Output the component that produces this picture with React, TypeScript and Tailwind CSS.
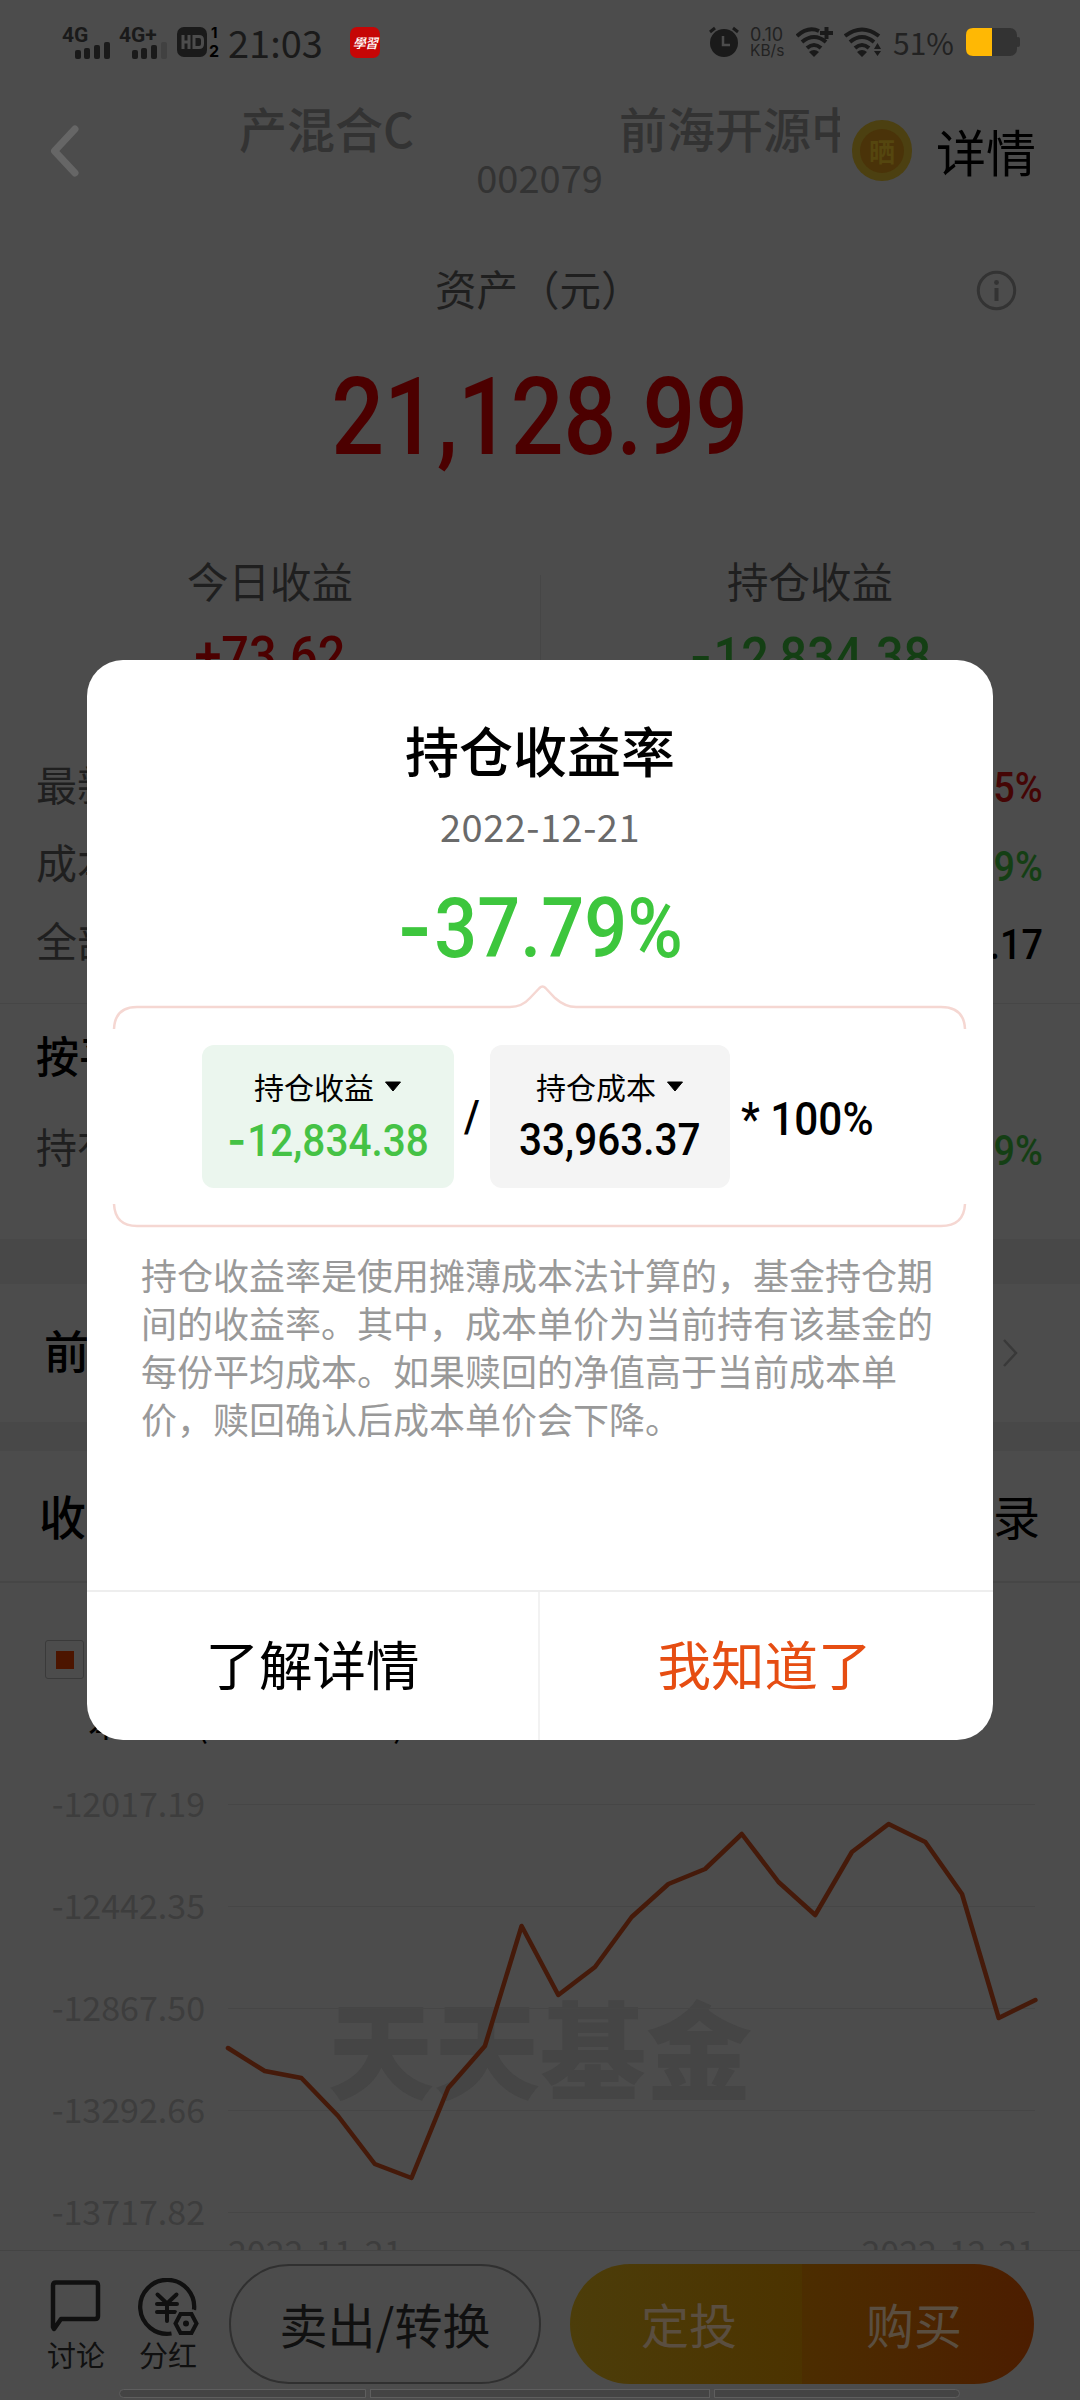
import React from "react";

interface NumProps {
  children: string;
  className?: string;
}

// Condensed figures used for all money values, with a wide minus sign
const Num: React.FC<NumProps> = ({ children, className = "" }) => {
  const negative = children.startsWith("-");

  return (
    <span
      className={`inline-block scale-x-[0.9] whitespace-nowrap font-['Roboto','Noto_Sans_CJK_SC',sans-serif] font-medium ${className}`}
    >
      {negative && <span className="mr-[0.03em] font-['Inter',sans-serif] font-semibold">-</span>}
      {negative ? children.slice(1) : children}
    </span>
  );
};

const StatusBar: React.FC = () => (
  <div className="flex h-[84px] items-center pl-[62px] pr-[60px] text-[#1a1a1a]">
    {/* Signal strength */}
    <svg className="h-[36px] w-[50px] shrink-0 overflow-visible" viewBox="0 0 50 36">
      <text x="0" y="18" fontSize="21" fontWeight="700" fontFamily="Roboto" fill="#1a1a1a">
        4G
      </text>
      <g fill="#1a1a1a">
        <rect x="13" y="26" width="6" height="9" rx="2" />
        <rect x="22" y="24" width="6" height="11" rx="2" />
        <rect x="32" y="21" width="6" height="14" rx="2" />
        <rect x="42" y="18" width="6" height="17" rx="2" />
      </g>
    </svg>
    <svg className="ml-[7px] h-[36px] w-[50px] shrink-0 overflow-visible" viewBox="0 0 50 36">
      <text x="0" y="18" fontSize="21" fontWeight="700" fontFamily="Roboto" fill="#1a1a1a">
        4G+
      </text>
      <rect x="13" y="26" width="6" height="9" rx="2" fill="#1a1a1a" />
      <rect x="22" y="24" width="6" height="11" rx="2" fill="#1a1a1a" />
      <rect x="32" y="21" width="6" height="14" rx="2" fill="#1a1a1a" />
      <rect x="42" y="18" width="6" height="17" rx="2" fill="#414141" />
    </svg>
    {/* HD badge */}
    <svg className="ml-[8px] h-[32px] w-[44px] shrink-0 overflow-visible" viewBox="0 0 44 32">
      <rect x="0" y="1" width="30" height="30" rx="7" fill="#1a1a1a" />
      <path d="M6 9v14M12 9v14M6 16h6" stroke="#4c4c4c" strokeWidth="3" fill="none" />
      <path d="M17 10.500h5q3.500 0 3.500 3.500v4q0 3.500-3.500 3.500h-5z" stroke="#4c4c4c" strokeWidth="3" fill="none" />
      <text x="34" y="12" fontSize="15" fontWeight="700" fontFamily="Inter">
        1
      </text>
      <text x="32" y="31" fontSize="16" fontWeight="700" fontFamily="Inter">
        2
      </text>
    </svg>
    <span className="ml-[7px] w-[98px] font-['Noto_Sans_CJK_SC',sans-serif] text-[38px] leading-[40px]">
      21:03
    </span>
    <div className="ml-[24px] flex h-[31px] w-[30px] items-center justify-center rounded-[7px] bg-[#c60606] text-[13px] font-medium italic leading-none tracking-tighter text-white">
      學習
    </div>

    <div className="ml-auto flex items-center">
      {/* Alarm */}
      <svg className="h-[32px] w-[30px]" viewBox="0 0 30 32">
        <circle cx="15" cy="17" r="14" fill="#1a1a1a" />
        <path d="M1 6l5-4M29 6l-5-4" stroke="#1a1a1a" strokeWidth="3" />
        <path d="M14 10v9h7" stroke="#4c4c4c" strokeWidth="2.500" fill="none" />
      </svg>
      <div className="ml-[11px] w-[37px] font-['Inter',sans-serif] text-[#222]">
        <div className="text-[18px] leading-[17px]">0.10</div>
        <div className="text-[15.500px] leading-[16px]">KB/s</div>
      </div>
      <svg className="ml-[9px] h-[30px] w-[38px]" viewBox="0 0 38 30">
        <g stroke="#1a1a1a" strokeWidth="4" fill="none">
          <path d="M1 9Q12-1 23 4" />
          <path d="M6 15Q18 5 30 15" />
          <path d="M11 21Q18 15 25 21" />
          <path d="M24 6h13M30.500 0v12" />
        </g>
        <path d="M13 25q5-4 10 0l-5 5z" fill="#1a1a1a" />
      </svg>
      <svg className="ml-[10px] h-[30px] w-[40px]" viewBox="0 0 40 30">
        <g stroke="#1a1a1a" strokeWidth="4" fill="none">
          <path d="M1 9Q18-4 35 9" />
          <path d="M6 15Q18 5 30 15" />
          <path d="M11 21Q18 15 25 21" />
        </g>
        <path d="M13 25q5-4 10 0l-5 5zM30 22l3.500-6 3.500 6zM30 24h7l-3.500 5z" fill="#1a1a1a" />
      </svg>
      <span className="ml-[9px] w-[66px] text-[30px] leading-[32px] text-[#222]">51%</span>
      <svg className="ml-[7px] h-[28px] w-[54px]" viewBox="0 0 54 28">
        <rect x="0" y="0" width="51" height="28" rx="7" fill="#333" />
        <rect x="50" y="9" width="4" height="10" rx="2" fill="#333" />
        <path d="M7 0h19v28H7q-7 0-7-7V7q0-7 7-7z" fill="#ffb804" />
      </svg>
    </div>
  </div>
);

const Header: React.FC = () => (
  <header className="flex h-[136px] text-[#333]">
    <svg className="ml-[50px] mt-[41px] h-[52px] w-[30px] shrink-0" viewBox="0 0 30 52">
      <path d="M25 4L4.500 26L25 48" stroke="#666" strokeWidth="7" strokeLinecap="round" strokeLinejoin="round" fill="none" />
    </svg>
    {/* Scrolling fund name */}
    <div className="ml-[159px] w-[601px]">
      <div className="mt-[12px] flex h-[62px] items-center gap-[202px] overflow-hidden whitespace-nowrap text-[48px] font-medium leading-[60px]">
        <span className="w-[178px] shrink-0">产混合C</span>
        <span className="shrink-0">前海开源中证</span>
      </div>
      <div className="text-center text-[38px] leading-[38px]">002079</div>
    </div>
    <div className="ml-[12px] mt-[36px] flex h-[61px] w-[60px] items-center justify-center rounded-full bg-[#4c4011]">
      <div className="flex h-[44px] w-[44px] items-center justify-center rounded-full bg-[#4a3309] text-[26px] font-bold leading-none text-[#55460f]">
        晒
      </div>
    </div>
    <span className="ml-[24px] mt-[36px] whitespace-nowrap text-[50px] leading-[60px] text-black">详情</span>
  </header>
);

const Assets: React.FC = () => (
  <section className="h-[500px]">
    <div className="flex h-[136px] items-center">
      <span className="ml-[435px] w-[529px] text-[41.5px] text-[#1f1f1f]">资产（元）</span>
      <svg className="ml-[12px] mt-[5px] h-[41px] w-[41px]" viewBox="0 0 41 41">
        <circle cx="20.500" cy="20.500" r="18.200" stroke="#333" strokeWidth="3" fill="none" />
        <circle cx="20.500" cy="12.500" r="2.400" fill="#333" />
        <path d="M20.500 18v13" stroke="#333" strokeWidth="4" />
      </svg>
    </div>
    <div className="flex h-[117px] items-center justify-center pt-[6px]">
      <Num className="scale-x-[0.87] text-[107px] leading-[117px] text-[#4c0000]">21,128.99</Num>
    </div>
    <div className="mt-[80px] grid grid-cols-2 text-center">
      <div className="h-[167px]">
        <div className="text-[41.5px] leading-[54px] text-[#1f1f1f]">今日收益</div>
        <Num className="mt-[16px] text-[54px] leading-[66px] text-[#4c0000]">+73.62</Num>
      </div>
      <div className="relative">
        <div className="absolute left-0 top-[22px] h-[145px] w-px bg-[#464646]" />
        <div className="text-[41.5px] leading-[54px] text-[#1f1f1f]">持仓收益</div>
        <Num className="mt-[16px] text-[54px] leading-[66px] text-[#143f14]">-12,834.38</Num>
      </div>
    </div>
  </section>
);

const rows = [
  { label: "最新净值", value: "+0.35%", color: "text-[#450505]" },
  { label: "成本单价", value: "-37.79%", color: "text-[#143f14]" },
  { label: "全部收益", value: "-12,834.17", color: "text-black" },
];

const Holdings: React.FC = () => (
  <section className="h-[519px] pl-[36px] pr-[37px]">
    <div className="pt-[25px]">
      {rows.map((row) => (
        <div key={row.label} className="flex h-[78px] items-center justify-between text-[41px] text-[#1f1f1f]">
          <span>{row.label}</span>
          <Num className={`origin-right pt-[7px] text-[42px] ${row.color}`}>{row.value}</Num>
        </div>
      ))}
    </div>
    <div className="mx-[-37px] mt-[24px] h-px bg-[#464646]" />
    <div className="mt-[18px] text-[43px] font-medium leading-[64px] text-black">按平台</div>
    <div className="mt-[28px] flex h-[64px] items-center justify-between text-[41px] text-[#1f1f1f]">
      <span>持有收益</span>
      <Num className="origin-right pt-[7px] text-[42px] text-[#143f14]">-37.79%</Num>
    </div>
  </section>
);

const yLabels = ["-12017.19", "-12442.35", "-12867.50", "-13292.66", "-13717.82"];
const points = [
  2048, 2071, 2078, 2116, 2164, 2178, 2088, 2046, 1926, 1995, 1967, 1917, 1884, 1869, 1834, 1882,
  1915, 1852, 1824, 1842, 1894, 2018, 2000,
];

const ProfitChart: React.FC = () => {
  const line = points.map((y, i) => `${(4 + i * 36.7).toFixed(1)},${y - 1754}`).join(" ");

  return (
    <section className="flex h-[496px] text-[34px] text-[#3d3d3d]">
      <div className="w-[205px] text-right">
        {yLabels.map((label) => (
          <div key={label} className="h-[102px] leading-[98px]">
            {label}
          </div>
        ))}
      </div>
      <div className="relative ml-[19px] w-[820px]">
        {/* Watermark */}
        <div className="absolute left-[104px] top-[231px] whitespace-nowrap text-[106px] font-black leading-[120px] text-[#454545]">
          天天基金
        </div>
        <svg className="relative block h-[476px] w-[820px]" viewBox="0 0 820 476">
          {yLabels.map((label, i) => (
            <path key={label} d={`M4 ${50.5 + i * 102}H811`} stroke="#464646" strokeWidth="1" />
          ))}
          <polyline points={line} stroke="#451a0a" strokeWidth="4.500" strokeLinecap="round" strokeLinejoin="round" fill="none" />
        </svg>
        <div className="flex h-[20px] w-[812px] justify-between overflow-hidden pl-[4px] leading-[42px]">
          <span>2022-11-21</span>
          <span>2022-12-21</span>
        </div>
      </div>
    </section>
  );
};

const BottomBar: React.FC = () => (
  <footer className="h-[150px] border-t border-[#444]">
    <div className="flex h-[134px] items-center pt-[12px] text-[#101010]">
      <div className="ml-[46px] flex w-[60px] flex-col items-center pt-[2px]">
        <svg className="h-[60px] w-[58px]" viewBox="0 0 58 60">
          <path
            d="M6 49V7.500Q6 4.500 9 4.500h39q3 0 3 3V38q0 3-3 3H14L7 51z"
            stroke="#101010"
            strokeWidth="4.500"
            strokeLinejoin="round"
            fill="none"
          />
        </svg>
        <span className="mt-[-3px] text-[29px] leading-[38px]">讨论</span>
      </div>
      <div className="ml-[31px] flex w-[62px] flex-col items-center pt-[2px]">
        <svg className="h-[60px] w-[62px]" viewBox="0 0 62 60">
          <path d="M57 32A27 27 0 1 0 34.500 55.500" stroke="#101010" strokeWidth="4.300" fill="none" />
          <path
            d="M20.500 16.500l9.500 9 9.500-9M20 26h20M20 34h18M30 26v17"
            stroke="#101010"
            strokeWidth="4"
            strokeLinecap="round"
            fill="none"
          />
          <path d="M43.500 35.500h11l5.500 10-5.500 10h-11l-5.500-10z" stroke="#4c4c4c" strokeWidth="8" fill="#4c4c4c" />
          <path d="M43.500 36h11l5 9.500-5 9.500h-11l-5-9.500z" stroke="#101010" strokeWidth="4" fill="none" />
          <circle cx="49" cy="45.500" r="3" fill="#101010" />
        </svg>
        <span className="mt-[-3px] text-[29px] leading-[38px]">分红</span>
      </div>
      <button className="ml-[30px] h-[120px] w-[312px] rounded-full border-2 border-[#303030] pb-[3px] text-[48px]">
        卖出/转换
      </button>
      <div className="ml-[29px] flex h-[120px] w-[464px] overflow-hidden rounded-full text-[48px] text-[#5a4e40]">
        <button className="w-[232px] bg-gradient-to-r from-[#4c3d0a] to-[#4c3300] pb-[3px] pl-[6px]">定投</button>
        <button className="w-[232px] bg-gradient-to-r from-[#4c2d00] to-[#4c1d00] pb-[3px] pr-[8px]">购买</button>
      </div>
    </div>
    {/* Gesture hint */}
    <div className="ml-[119px] mt-[4px] flex gap-[4px]">
      <div className="h-[9px] w-[247px] rounded-l-full border border-[#5e5e5e] bg-[#444]" />
      <div className="h-[9px] w-[340px] border border-[#5e5e5e] bg-[#444]" />
      <div className="h-[9px] w-[246px] rounded-r-full border border-[#5e5e5e] bg-[#444]" />
    </div>
  </footer>
);

const Caret: React.FC = () => (
  <svg className="ml-[10px] h-[11px] w-[18px]" viewBox="0 0 18 11">
    <path d="M1.500 1h15L9 10z" fill="#000" stroke="#000" strokeLinejoin="round" />
  </svg>
);

const RateDialog: React.FC = () => (
  <div className="absolute left-[87px] top-[660px] flex h-[1080px] w-[906px] flex-col overflow-hidden rounded-[36px] bg-white">
    <h2 className="mt-[58px] text-center text-[54px] font-medium leading-[64px] text-black">持仓收益率</h2>
    <p className="mt-[20px] text-center text-[38px] leading-[48px] tracking-[0.5px] text-[#6a6a6a]">2022-12-21</p>
    <div className="mt-[26px] flex h-[104px] items-center justify-center">
      <Num className="text-[84px] leading-[104px] text-[#3dc63d]">-37.79%</Num>
    </div>

    <svg className="ml-[25px] mt-[4px] h-[47px] w-[856px] shrink-0" viewBox="0 0 856 47">
      <path
        d="M2 45Q3 23 25 23H398Q410 23 418 14L427.500 4Q430.500 1 433.500 4L443 14Q453 23 464 23H829Q852 23 853 45"
        stroke="#f5d7d2"
        strokeWidth="2.500"
        fill="none"
      />
    </svg>
    {/* Formula */}
    <div className="mt-[14px] flex h-[143px] items-center pl-[115px] text-black">
      <div className="flex h-[143px] w-[252px] flex-col items-center rounded-[12px] bg-[#ebf6ee] pt-[21px]">
        <div className="flex items-center text-[30px] leading-[40px]">
          持仓收益
          <Caret />
        </div>
        <Num className="mt-[7px] text-[45px] leading-[54px] text-[#45c245]">-12,834.38</Num>
      </div>
      <Num className="w-[36px] text-center text-[45px]">/</Num>
      <div className="flex h-[143px] w-[240px] flex-col items-center rounded-[12px] bg-[#f4f4f4] pt-[21px]">
        <div className="flex items-center text-[30px] leading-[40px]">
          持仓成本
          <Caret />
        </div>
        <Num className="mt-[7px] text-[45px] leading-[54px]">33,963.37</Num>
      </div>
      <Num className="ml-[11px] origin-left pt-[6px] text-[47px]">* 100%</Num>
    </div>
    <svg className="ml-[25px] mt-[16px] h-[25px] w-[856px] shrink-0" viewBox="0 0 856 25">
      <path d="M2 0Q3 22 25 22H829Q852 22 853 0" stroke="#f5d7d2" strokeWidth="2.500" fill="none" />
    </svg>

    <p className="ml-[54px] mt-[21px] w-[798px] text-[36px] leading-[48px] text-[#999]">
      持仓收益率是使用摊薄成本法计算的，基金持仓期间的收益率。其中，成本单价为当前持有该基金的每份平均成本。如果赎回的净值高于当前成本单价，赎回确认后成本单价会下降。
    </p>

    <div className="mt-auto flex h-[150px] shrink-0 border-t-2 border-[#eee] text-[53.5px]">
      <button className="w-[453px] border-r-2 border-[#f2f2f2] pb-[6px] text-black">了解详情</button>
      <button className="w-[453px] pb-[6px] pr-[4px] text-[#e64d12]">我知道了</button>
    </div>
  </div>
);

export default function App() {
  return (
    <div className="relative h-[2400px] w-[1080px] overflow-hidden bg-[#4c4c4c] font-['Noto_Sans_CJK_SC',sans-serif]">
      <StatusBar />
      <Header />
      <Assets />
      <Holdings />
      <div className="h-[45px] bg-[#484848]" />
      <div className="flex h-[138px] items-center justify-between pl-[44px] pr-[61px] text-[45px] font-medium text-black">
        <span className="pb-[6px]">前海开源</span>
        <svg className="h-[30px] w-[17px]" viewBox="0 0 17 30">
          <path d="M2 2l12 13L2 28" stroke="#393939" strokeWidth="2.500" fill="none" />
        </svg>
      </div>
      <div className="h-[29px] bg-[#484848]" />
      <div className="flex h-[132px] items-center justify-between border-b-2 border-[#464646] pb-[2px] pl-[39px] pr-[40px] text-[47px] text-black">
        <span className="font-medium">收益走势</span>
        <span>交易记录</span>
      </div>
      <div className="h-[171px] pt-[57px]">
        <div className="ml-[45px] flex h-[39px] w-[39px] items-center justify-center rounded-[3px] border border-[#3a3a3a]">
          <div className="h-[18px] w-[18px] bg-[#4c1500]" />
        </div>
        <div className="ml-[88px] mt-[18px] text-[36px] leading-[48px] text-black">本基金(2022-12-21)</div>
      </div>
      <ProfitChart />
      <BottomBar />
      <RateDialog />
    </div>
  );
}
